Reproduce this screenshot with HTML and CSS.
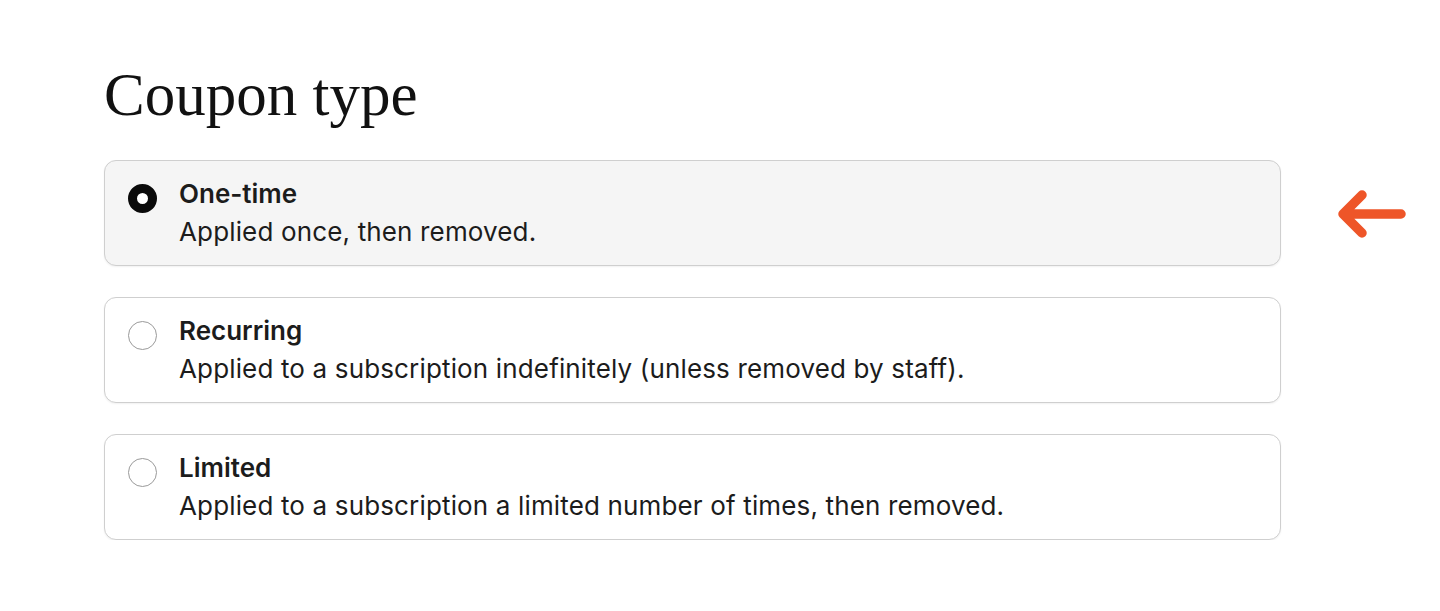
FILE: index.html
```html
<!DOCTYPE html>
<html lang="en">
<head>
<meta charset="utf-8">
<title>Coupon type</title>
<link rel="stylesheet" href="styles.css">
</head>
<body>
<main class="page">
  <h1 class="heading">Coupon type</h1>
  <div class="options">
    <label class="option is-selected">
      <span class="radio radio-on"></span>
      <span class="text">
        <span class="title">One-time</span>
        <span class="desc">Applied once, then removed.</span>
      </span>
      <svg class="pointer" width="80" height="56" viewBox="0 0 80 56" aria-hidden="true">
        <path d="M67 28 H9 M28 9 L9 28 L28 47" fill="none" stroke="#ee5528" stroke-width="9.5" stroke-linecap="round" stroke-linejoin="round"/>
      </svg>
    </label>
    <label class="option">
      <span class="radio"></span>
      <span class="text">
        <span class="title">Recurring</span>
        <span class="desc">Applied to a subscription indefinitely (unless removed by staff).</span>
      </span>
    </label>
    <label class="option">
      <span class="radio"></span>
      <span class="text">
        <span class="title">Limited</span>
        <span class="desc">Applied to a subscription a limited number of times, then removed.</span>
      </span>
    </label>
  </div>
</main>
</body>
</html>
```
FILE: styles.css
```css
html, body {
  margin: 0;
  padding: 0;
  background: #ffffff;
}
.page {
  padding: 62px 0 0 104px;
  width: 1177px;
}
.heading {
  margin: 0 0 32px 0;
  font-family: "Liberation Serif", "Times New Roman", serif;
  font-weight: 400;
  font-size: 61px;
  line-height: 66px;
  color: #111111;
}
.options {
  display: flex;
  flex-direction: column;
  gap: 31px;
}
.option {
  position: relative;
  display: flex;
  align-items: flex-start;
  gap: 22px;
  padding: 14px 24px 14px 23px;
  border: 1px solid #cfcfcf;
  border-radius: 12px;
  background: #ffffff;
  box-shadow: 0 1px 2px rgba(0,0,0,0.06);
  font-family: Inter, "Noto Sans", sans-serif;
  color: #1c1c1c;
}
.option.is-selected {
  background: #f5f5f5;
}
.radio {
  flex: none;
  box-sizing: border-box;
  width: 29px;
  height: 29px;
  margin-top: 9px;
  border-radius: 50%;
  border: 1.5px solid #9a9a9a;
  background: #ffffff;
}
.radio-on {
  border: 9px solid #0a0a0a;
}
.text {
  display: flex;
  flex-direction: column;
}
.title {
  font-size: 26px;
  font-weight: 600;
  line-height: 38px;
}
.desc {
  font-size: 26px;
  font-weight: 400;
  line-height: 38px;
  letter-spacing: 0.15px;
}
.pointer {
  position: absolute;
  left: 1229px;
  top: 25px;
}
```
